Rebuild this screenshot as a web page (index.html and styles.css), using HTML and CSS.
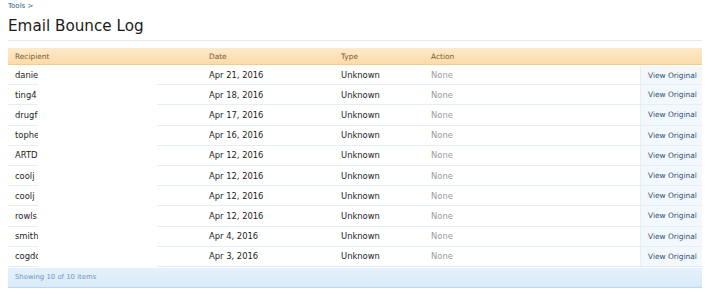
FILE: index.html
```html
<!DOCTYPE html>
<html>
<head>
<meta charset="utf-8">
<link rel="stylesheet" href="styles.css">
</head>
<body>
<div class="page">
  <div class="crumbs"><a href="#">Tools</a> &gt;</div>
  <h1 class="title">Email Bounce Log</h1>
  <div class="rule"></div>
  <div class="log">
    <div class="row head">
      <div class="cell">Recipient</div>
      <div class="cell">Date</div>
      <div class="cell">Type</div>
      <div class="cell">Action</div>
      <div class="cell"></div>
    </div>
    <div class="row"><div class="cell">danie</div><div class="cell">Apr 21, 2016</div><div class="cell">Unknown</div><div class="cell none">None</div><div class="cell view"><a href="#">View Original</a></div></div>
    <div class="row"><div class="cell">ting4</div><div class="cell">Apr 18, 2016</div><div class="cell">Unknown</div><div class="cell none">None</div><div class="cell view"><a href="#">View Original</a></div></div>
    <div class="row"><div class="cell">drugf</div><div class="cell">Apr 17, 2016</div><div class="cell">Unknown</div><div class="cell none">None</div><div class="cell view"><a href="#">View Original</a></div></div>
    <div class="row"><div class="cell">tophe</div><div class="cell">Apr 16, 2016</div><div class="cell">Unknown</div><div class="cell none">None</div><div class="cell view"><a href="#">View Original</a></div></div>
    <div class="row"><div class="cell">ARTD</div><div class="cell">Apr 12, 2016</div><div class="cell">Unknown</div><div class="cell none">None</div><div class="cell view"><a href="#">View Original</a></div></div>
    <div class="row"><div class="cell">coolj</div><div class="cell">Apr 12, 2016</div><div class="cell">Unknown</div><div class="cell none">None</div><div class="cell view"><a href="#">View Original</a></div></div>
    <div class="row"><div class="cell">coolj</div><div class="cell">Apr 12, 2016</div><div class="cell">Unknown</div><div class="cell none">None</div><div class="cell view"><a href="#">View Original</a></div></div>
    <div class="row"><div class="cell">rowls</div><div class="cell">Apr 12, 2016</div><div class="cell">Unknown</div><div class="cell none">None</div><div class="cell view"><a href="#">View Original</a></div></div>
    <div class="row"><div class="cell">smith</div><div class="cell">Apr 4, 2016</div><div class="cell">Unknown</div><div class="cell none">None</div><div class="cell view"><a href="#">View Original</a></div></div>
    <div class="row"><div class="cell">cogdc</div><div class="cell">Apr 3, 2016</div><div class="cell">Unknown</div><div class="cell none">None</div><div class="cell view"><a href="#">View Original</a></div></div>
    <div class="foot">Showing 10 of 10 items</div>
    <div class="redact"></div>
  </div>
</div>
</body>
</html>
```

FILE: styles.css
```css
html, body {
  margin: 0;
  padding: 0;
  background: #ffffff;
}

.page {
  padding: 1px 9px 0 8px;
  font-family: "DejaVu Sans", Verdana, sans-serif;
  color: #1c1c1c;
}

.crumbs {
  font-size: 7px;
  line-height: 10px;
  color: #2b5a86;
}

.crumbs a {
  color: #2b5a86;
  text-decoration: none;
}

.title {
  margin: 5px 0 0 0;
  font-size: 15.2px;
  line-height: 20px;
  font-weight: normal;
  color: #1a1a1a;
}

.rule {
  margin-top: 4px;
  height: 1px;
  background: #e4eaf0;
}

.log {
  position: relative;
  margin-top: 7px;
}

.row {
  display: grid;
  grid-template-columns: 194px 132px 90px 1fr 62px;
  height: 20.2px;
  box-sizing: border-box;
  border-bottom: 1px solid #e6eef5;
  font-size: 8.4px;
}

.row:nth-child(2) {
  padding-top: 1px;
}

.cell {
  display: flex;
  align-items: center;
  padding-left: 7px;
  white-space: nowrap;
}

.row.head {
  height: 17px;
  font-size: 7.4px;
  color: #7d5a2c;
  background: linear-gradient(#fde9cc, #fbdcaa);
  border-bottom: 1px solid #f3cb8e;
}

.none {
  color: #9a9a9a;
}

.view {
  background: #f3f8fc;
  border-left: 1px solid #e6eef5;
  font-size: 7.4px;
}

.view a {
  color: #2f4f72;
  text-decoration: none;
}

.foot {
  height: 19px;
  margin-top: 1px;
  display: flex;
  align-items: center;
  padding-left: 7px;
  font-size: 6.9px;
  color: #6f97bf;
  background: linear-gradient(#e4f1fc, #d9ebf9);
  border-bottom: 1px solid #bfd8ec;
}

.redact {
  position: absolute;
  left: 30px;
  top: 17px;
  width: 119px;
  height: 203px;
  background: #ffffff;
}
```
